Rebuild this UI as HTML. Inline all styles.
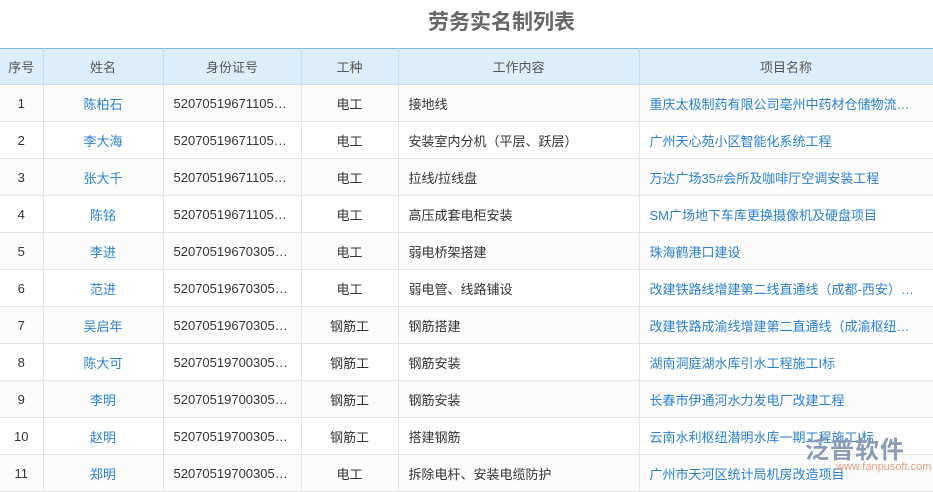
<!DOCTYPE html>
<html><head><meta charset="utf-8"><style>
body{margin:0;width:933px;height:483px;overflow:hidden;background:#fff;font-family:"Liberation Sans","Noto Sans CJK SC",sans-serif;font-size:13px;color:#333;position:relative}
h1{margin:0;position:absolute;top:8px;left:0;width:1003px;text-align:center;font-size:21px;color:#666;font-weight:bold;line-height:30px}
table{position:absolute;top:48px;left:0;border-collapse:collapse;table-layout:fixed;width:933px}
th{background:#ddeefc;color:#555;font-weight:normal;height:35px;padding:0;border-top:1px solid #7db8e8;border-right:1px solid #c6dcee;border-bottom:1px solid #c6dcee;font-size:13px}
td{height:36px;padding:0 10px;border-right:1px solid #e4e4e4;border-bottom:1px solid #e4e4e4;white-space:nowrap;overflow:hidden;text-overflow:ellipsis}
tr:nth-child(even) td{background:#fcfcfc}
.c{text-align:center}.b{color:#2a7fd4}
.wm{position:absolute;left:805px;top:430px;color:#8a9bb5;font-size:24px;font-weight:bold;letter-spacing:1px}
.wm2{position:absolute;left:836px;top:461px;color:#e0a080;font-size:11px}
</style></head><body>
<h1>劳务实名制列表</h1>
<table>
<colgroup><col style="width:43px"><col style="width:120px"><col style="width:138px"><col style="width:97px"><col style="width:241px"><col style="width:294px"></colgroup>
<tr><th>序号</th><th>姓名</th><th>身份证号</th><th>工种</th><th>工作内容</th><th>项目名称</th></tr>
<tr><td class="c">1</td><td class="c b">陈柏石</td><td>52070519671105…</td><td class="c">电工</td><td>接地线</td><td class="b">重庆太极制药有限公司亳州中药材仓储物流基地项目</td></tr>
<tr><td class="c">2</td><td class="c b">李大海</td><td>52070519671105…</td><td class="c">电工</td><td>安装室内分机（平层、跃层）</td><td class="b">广州天心苑小区智能化系统工程</td></tr>
<tr><td class="c">3</td><td class="c b">张大千</td><td>52070519671105…</td><td class="c">电工</td><td>拉线/拉线盘</td><td class="b">万达广场35#会所及咖啡厅空调安装工程</td></tr>
<tr><td class="c">4</td><td class="c b">陈铭</td><td>52070519671105…</td><td class="c">电工</td><td>高压成套电柜安装</td><td class="b">SM广场地下车库更换摄像机及硬盘项目</td></tr>
<tr><td class="c">5</td><td class="c b">李进</td><td>52070519670305…</td><td class="c">电工</td><td>弱电桥架搭建</td><td class="b">珠海鹤港口建设</td></tr>
<tr><td class="c">6</td><td class="c b">范进</td><td>52070519670305…</td><td class="c">电工</td><td>弱电管、线路铺设</td><td class="b">改建铁路线增建第二线直通线（成都-西安）电气工程</td></tr>
<tr><td class="c">7</td><td class="c b">吴启年</td><td>52070519670305…</td><td class="c">钢筋工</td><td>钢筋搭建</td><td class="b">改建铁路成渝线增建第二直通线（成渝枢纽）工程</td></tr>
<tr><td class="c">8</td><td class="c b">陈大可</td><td>52070519700305…</td><td class="c">钢筋工</td><td>钢筋安装</td><td class="b">湖南洞庭湖水库引水工程施工I标</td></tr>
<tr><td class="c">9</td><td class="c b">李明</td><td>52070519700305…</td><td class="c">钢筋工</td><td>钢筋安装</td><td class="b">长春市伊通河水力发电厂改建工程</td></tr>
<tr><td class="c">10</td><td class="c b">赵明</td><td>52070519700305…</td><td class="c">钢筋工</td><td>搭建钢筋</td><td class="b">云南水利枢纽潜明水库一期工程施工I标</td></tr>
<tr><td class="c">11</td><td class="c b">郑明</td><td>52070519700305…</td><td class="c">电工</td><td>拆除电杆、安装电缆防护</td><td class="b">广州市天河区统计局机房改造项目</td></tr>
</table>
<div class="wm">泛普软件</div>
<div class="wm2">www.fanpusoft.com</div>
</body></html>
